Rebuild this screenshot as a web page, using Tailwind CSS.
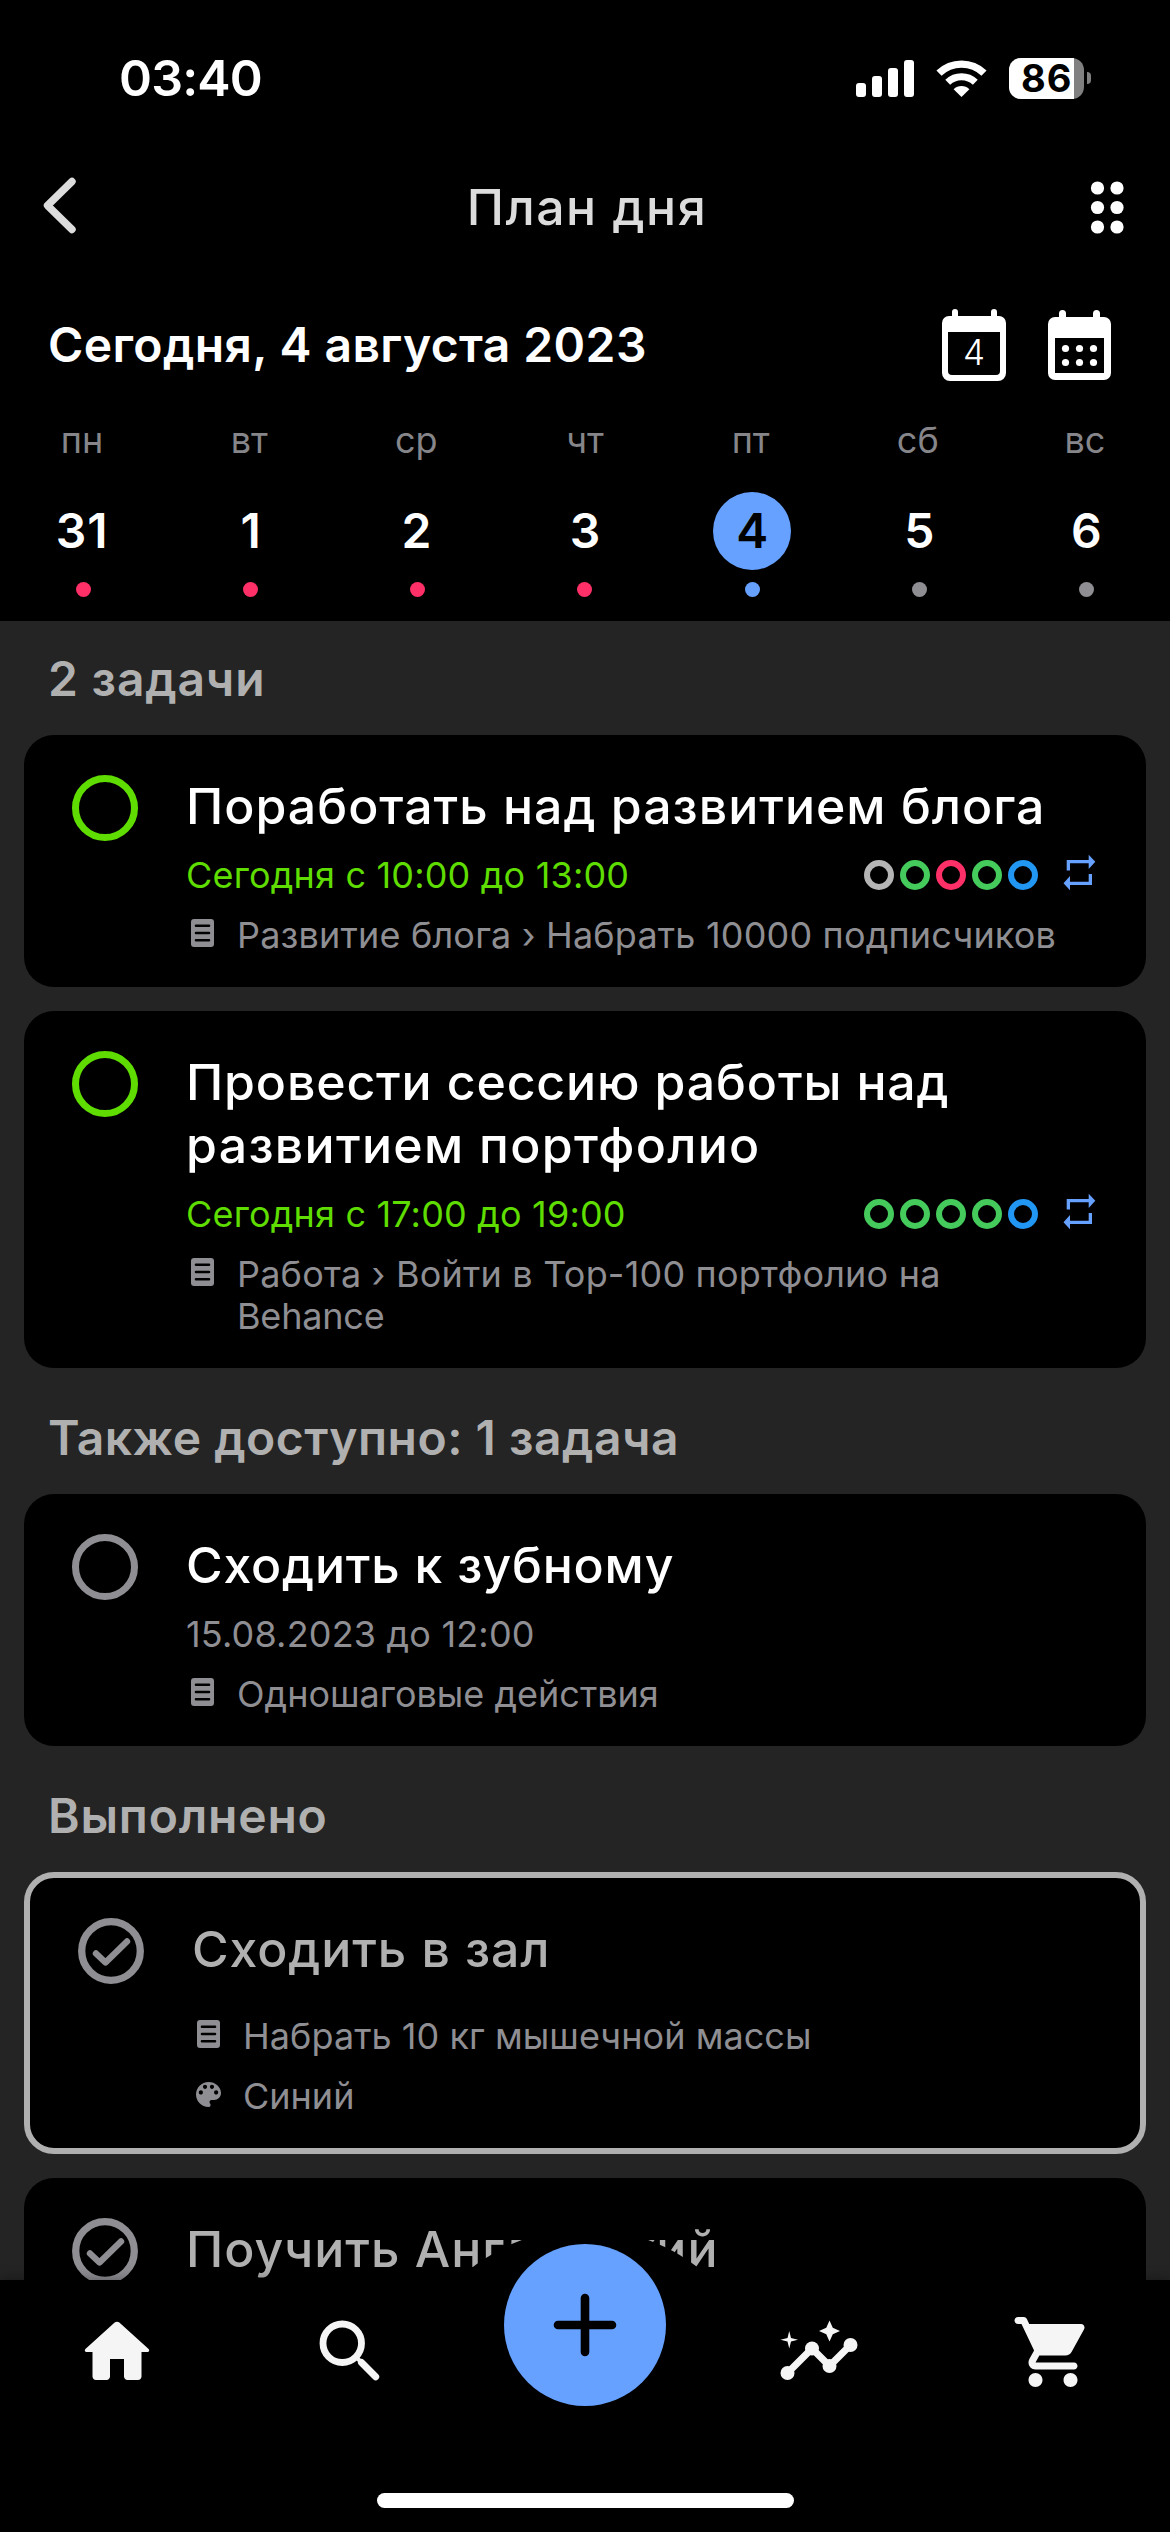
<!DOCTYPE html>
<html lang="ru">
<head>
  <meta charset="UTF-8">
  <meta name="viewport" content="width=device-width, initial-scale=1.0">
  <title>План дня</title>
  <script src="https://cdn.jsdelivr.net/npm/@tailwindcss/browser@4"></script>
</head>
<body class="bg-black">

  <!-- Shared icons -->
  <svg class="hidden">
    <symbol id="doc" viewBox="0 0 23 28">
      <path fill-rule="evenodd" d="M3 0h17a3 3 0 0 1 3 3v22a3 3 0 0 1-3 3H3a3 3 0 0 1-3-3V3a3 3 0 0 1 3-3zM5 5.5a1.3 1.3 0 0 0 0 2.6h13a1.3 1.3 0 0 0 0-2.6zM5 12.7a1.3 1.3 0 0 0 0 2.6h13a1.3 1.3 0 0 0 0-2.6zM5 19.9a1.3 1.3 0 0 0 0 2.6h13a1.3 1.3 0 0 0 0-2.6z"/>
    </symbol>
    <symbol id="repeat" viewBox="0 0 33 37">
      <path d="M3.7 16.5V6h22V.7l6.6 7-6.6 7.3V9.2H7v7.3z"/>
      <path d="M29 20v11H7v5.3L.5 29.3 7 22v5.8h18.7V20z"/>
    </symbol>
    <symbol id="check" viewBox="0 0 66 66">
      <circle cx="33" cy="33" r="29.3" fill="none" stroke="currentColor" stroke-width="7.3"/>
      <path d="M18 35.5l9.5 9L49 23.5" fill="none" stroke="currentColor" stroke-width="6.4" stroke-linecap="round" stroke-linejoin="round"/>
    </symbol>
  </svg>

  <div class="w-[1170px] h-[2532px] overflow-hidden flex flex-col bg-black text-white font-['Inter',sans-serif]">

    <!-- Status bar -->
    <div class="h-[156px] shrink-0 flex items-center justify-between pl-[119px] pr-[79px]">
      <span class="text-[50px] leading-[60px] font-semibold tracking-[-0.8px]">03:40</span>
      <div class="flex items-center">
        <svg class="w-[58px] h-[37px]" viewBox="0 0 58 37" fill="white">
          <rect x="0" y="23" width="10" height="14" rx="3"/>
          <rect x="16" y="16" width="10" height="21" rx="3"/>
          <rect x="32" y="8" width="10" height="29" rx="3"/>
          <rect x="48" y="0" width="10" height="37" rx="3"/>
        </svg>
        <svg class="w-[51px] h-[37px] ml-[22px]" viewBox="0 0 51 37">
          <path d="M3 13.2a32.5 32.5 0 0 1 45 0" fill="none" stroke="white" stroke-width="7.4"/>
          <path d="M11.7 22.2a20 20 0 0 1 27.6 0" fill="none" stroke="white" stroke-width="7"/>
          <path d="M17.6 29.2a11.5 11.5 0 0 1 15.8 0L25.5 37z" fill="white"/>
        </svg>
        <div class="flex items-center ml-[22px]">
          <div class="w-[75px] h-[41px] rounded-[12px] bg-[#808080]">
            <div class="w-[65px] h-full rounded-l-[12px] bg-white text-black flex items-center pl-[12px]">
              <span class="text-[38px] leading-[46px] font-bold tracking-[1px]">86</span>
            </div>
          </div>
          <div class="w-[4px] h-[12px] ml-[3px] rounded-r-full bg-[#808080]"></div>
        </div>
      </div>
    </div>

    <!-- App bar -->
    <header class="h-[102px] shrink-0 flex items-center justify-between pl-[42px] pr-[46px]">
      <svg class="w-[35px] h-[57px] -mt-[4px]" viewBox="0 0 35 57" fill="none" stroke="#dcdcdc" stroke-width="7.4" stroke-linecap="round" stroke-linejoin="round">
        <path d="M30 4.5L5.5 28.5 30 52.5"/>
      </svg>
      <h1 class="pl-[7px] text-[50px] leading-[60px] font-medium tracking-[1.5px] text-[#dcdcdc]">План дня</h1>
      <svg class="w-[34px] h-[53px]" viewBox="0 0 34 53" fill="white">
        <circle cx="7.5" cy="7" r="6.6"/><circle cx="27" cy="7" r="6.6"/>
        <circle cx="7.5" cy="26.5" r="6.6"/><circle cx="27" cy="26.5" r="6.6"/>
        <circle cx="7.5" cy="46" r="6.6"/><circle cx="27" cy="46" r="6.6"/>
      </svg>
    </header>

    <!-- Date -->
    <div class="h-[161px] shrink-0 flex items-center justify-between pl-[48px] pr-[59px] pt-[12px]">
      <h2 class="text-[48px] leading-[60px] font-semibold tracking-[0.4px]">Сегодня, 4 августа 2023</h2>
      <div class="flex items-center gap-[42px]">
        <svg class="w-[64px] h-[72px]" viewBox="0 0 64 72">
          <path fill="white" fill-rule="evenodd" d="M10 7V3a3 3 0 0 1 6 0v4h33V3a3 3 0 0 1 6 0v4h2a7 7 0 0 1 7 7v50a8 8 0 0 1-8 8H8a8 8 0 0 1-8-8V14a7 7 0 0 1 7-7zM6 23v39a4 4 0 0 0 4 4h44a4 4 0 0 0 4-4V23z"/>
          <text x="32" y="56" text-anchor="middle" fill="white" font-size="35" font-weight="300">4</text>
        </svg>
        <svg class="w-[63px] h-[70px]" viewBox="0 0 63 70" fill="white">
          <path fill-rule="evenodd" d="M11 7V3.5a3.5 3.5 0 0 1 7 0V7h27V3.5a3.5 3.5 0 0 1 7 0V7h4a7 7 0 0 1 7 7v49a7 7 0 0 1-7 7H7a7 7 0 0 1-7-7V14a7 7 0 0 1 7-7zM7 28v35h49V28z"/>
          <circle cx="17.5" cy="38.5" r="3.6"/><circle cx="31.5" cy="38.5" r="3.6"/><circle cx="45.5" cy="38.5" r="3.6"/>
          <circle cx="17.5" cy="52.5" r="3.6"/><circle cx="31.5" cy="52.5" r="3.6"/><circle cx="45.5" cy="52.5" r="3.6"/>
        </svg>
      </div>
    </div>

    <!-- Week -->
    <div class="h-[202px] shrink-0 grid grid-cols-7">
      <div class="flex flex-col items-center">
        <span class="text-[36px] leading-[42px] text-[#86868a] pr-[3px]">пн</span>
        <span class="mt-[31px] size-[78px] flex items-center justify-center text-[48px] font-semibold tracking-[1px] pr-[3px]">31</span>
        <span class="mt-[12px] size-[15px] rounded-full bg-[#ff2f67]"></span>
      </div>
      <div class="flex flex-col items-center">
        <span class="text-[36px] leading-[42px] text-[#86868a] pr-[3px]">вт</span>
        <span class="mt-[31px] size-[78px] flex items-center justify-center text-[48px] font-semibold">1</span>
        <span class="mt-[12px] size-[15px] rounded-full bg-[#ff2f67]"></span>
      </div>
      <div class="flex flex-col items-center">
        <span class="text-[36px] leading-[42px] text-[#86868a] pr-[3px]">ср</span>
        <span class="mt-[31px] size-[78px] flex items-center justify-center text-[48px] font-semibold pr-[3px]">2</span>
        <span class="mt-[12px] size-[15px] rounded-full bg-[#ff2f67]"></span>
      </div>
      <div class="flex flex-col items-center">
        <span class="text-[36px] leading-[42px] text-[#86868a]">чт</span>
        <span class="mt-[31px] size-[78px] flex items-center justify-center text-[48px] font-semibold">3</span>
        <span class="mt-[12px] size-[15px] rounded-full bg-[#ff2f67]"></span>
      </div>
      <div class="flex flex-col items-center">
        <span class="text-[36px] leading-[42px] text-[#86868a] pr-[3px]">пт</span>
        <span class="mt-[31px] size-[78px] flex items-center justify-center text-[48px] font-semibold rounded-full bg-[#66a1ff] text-black">4</span>
        <span class="mt-[12px] size-[15px] rounded-full bg-[#66a1ff]"></span>
      </div>
      <div class="flex flex-col items-center">
        <span class="text-[36px] leading-[42px] text-[#86868a] pr-[3px]">сб</span>
        <span class="mt-[31px] size-[78px] flex items-center justify-center text-[48px] font-semibold">5</span>
        <span class="mt-[12px] size-[15px] rounded-full bg-[#8e8e93]"></span>
      </div>
      <div class="flex flex-col items-center">
        <span class="text-[36px] leading-[42px] text-[#86868a] pr-[3px]">вс</span>
        <span class="mt-[31px] size-[78px] flex items-center justify-center text-[48px] font-semibold">6</span>
        <span class="mt-[12px] size-[15px] rounded-full bg-[#8e8e93]"></span>
      </div>
    </div>

    <!-- Tasks -->
    <main class="h-[1659px] shrink-0 overflow-hidden bg-[#242424] px-[24px]">

      <h3 class="pt-[28px] pb-[26px] pl-[24px] text-[48px] leading-[60px] font-semibold tracking-[0.8px] text-[#b0b0b0]">2 задачи</h3>

      <div class="flex rounded-[30px] bg-black pl-[48px] pr-[50px] pt-[40px] pb-[31px]">
        <div class="size-[66px] shrink-0 rounded-full border-[7px] border-[#5fdd00]"></div>
        <div class="flex-1 ml-[48px]">
          <div class="text-[50px] leading-[63px] tracking-[1px] font-medium whitespace-nowrap">Поработать над развитием блога</div>
          <div class="mt-[16px] flex items-center text-[36px] leading-[42px] text-[#5fdd00]">
            <span class="tracking-[0.18px]">Сегодня с 10:00 до 13:00</span>
            <div class="ml-auto flex gap-[6px]">
              <span class="size-[30px] rounded-full border-[6px] border-[#b5b5b5]"></span>
              <span class="size-[30px] rounded-full border-[6px] border-[#45cb5c]"></span>
              <span class="size-[30px] rounded-full border-[6px] border-[#ff2f67]"></span>
              <span class="size-[30px] rounded-full border-[6px] border-[#45cb5c]"></span>
              <span class="size-[30px] rounded-full border-[6px] border-[#2196f3]"></span>
            </div>
            <svg class="w-[33px] h-[37px] ml-[25px] -mt-[5px] fill-[#66a1ff]"><use href="#repeat"/></svg>
          </div>
          <div class="mt-[18px] flex text-[36px] leading-[42px] text-[#8e8e93]">
            <svg class="w-[23px] h-[28px] mt-[5px] ml-[5px] mr-[23px] shrink-0 fill-current"><use href="#doc"/></svg>
            <span class="tracking-[0.18px] whitespace-nowrap">Развитие блога › Набрать 10000 подписчиков</span>
          </div>
        </div>
      </div>

      <div class="mt-6 flex rounded-[30px] bg-black pl-[48px] pr-[50px] pt-[40px] pb-[31px]">
        <div class="size-[66px] shrink-0 rounded-full border-[7px] border-[#5fdd00]"></div>
        <div class="flex-1 ml-[48px]">
          <div class="text-[50px] leading-[63px] tracking-[0.85px] font-medium whitespace-nowrap">Провести сессию работы над<br><span class="tracking-[1.3px]">развитием портфолио</span></div>
          <div class="mt-[16px] flex items-center text-[36px] leading-[42px] text-[#5fdd00]">
            <span class="tracking-[0.18px]">Сегодня с 17:00 до 19:00</span>
            <div class="ml-auto flex gap-[6px]">
              <span class="size-[30px] rounded-full border-[6px] border-[#45cb5c]"></span>
              <span class="size-[30px] rounded-full border-[6px] border-[#45cb5c]"></span>
              <span class="size-[30px] rounded-full border-[6px] border-[#45cb5c]"></span>
              <span class="size-[30px] rounded-full border-[6px] border-[#45cb5c]"></span>
              <span class="size-[30px] rounded-full border-[6px] border-[#2196f3]"></span>
            </div>
            <svg class="w-[33px] h-[37px] ml-[25px] -mt-[5px] fill-[#66a1ff]"><use href="#repeat"/></svg>
          </div>
          <div class="mt-[18px] flex text-[36px] leading-[42px] text-[#8e8e93]">
            <svg class="w-[23px] h-[28px] mt-[5px] ml-[5px] mr-[23px] shrink-0 fill-current"><use href="#doc"/></svg>
            <span class="tracking-[0.2px] whitespace-nowrap">Работа › Войти в Top-100 портфолио на<br><span class="tracking-[-0.2px]">Behance</span></span>
          </div>
        </div>
      </div>

      <h3 class="pt-[40px] pb-[26px] pl-[24px] text-[48px] leading-[60px] font-semibold tracking-[0.5px] text-[#b0b0b0]">Также доступно: 1 задача</h3>

      <div class="flex rounded-[30px] bg-black pl-[48px] pr-[50px] pt-[40px] pb-[31px]">
        <div class="size-[66px] shrink-0 rounded-full border-[7px] border-[#8e8e93]"></div>
        <div class="flex-1 ml-[48px]">
          <div class="text-[50px] leading-[63px] tracking-[0.8px] font-medium">Сходить к зубному</div>
          <div class="mt-[16px] text-[36px] leading-[42px] tracking-[0.18px] text-[#8e8e93]">15.08.2023 до 12:00</div>
          <div class="mt-[18px] flex text-[36px] leading-[42px] text-[#8e8e93]">
            <svg class="w-[23px] h-[28px] mt-[5px] ml-[5px] mr-[23px] shrink-0 fill-current"><use href="#doc"/></svg>
            <span>Одношаговые действия</span>
          </div>
        </div>
      </div>

      <h3 class="pt-[40px] pb-[26px] pl-[24px] text-[48px] leading-[60px] font-semibold tracking-[0.8px] text-[#b0b0b0]">Выполнено</h3>

      <div class="flex rounded-[30px] bg-black border-[6px] border-[#b0b0b0] pl-[48px] pr-[44px] pt-[40px] pb-[31px]">
        <svg class="size-[66px] shrink-0 text-[#8e8e93]"><use href="#check"/></svg>
        <div class="flex-1 ml-[48px]">
          <div class="text-[50px] leading-[63px] tracking-[0.9px] font-medium text-[#b0b0b0]">Сходить в зал</div>
          <div class="mt-[34px] flex text-[36px] leading-[42px] text-[#8e8e93]">
            <svg class="w-[23px] h-[28px] mt-[5px] ml-[5px] mr-[23px] shrink-0 fill-current"><use href="#doc"/></svg>
            <span class="tracking-[0.05px]">Набрать 10 кг мышечной массы</span>
          </div>
          <div class="mt-[18px] flex text-[36px] leading-[42px] text-[#8e8e93]">
            <svg class="size-[25px] mt-[7px] ml-[4px] mr-[22px] shrink-0 fill-current" viewBox="3 3 18 18">
              <path d="M12 3c-4.97 0-9 4.03-9 9s4.03 9 9 9c.83 0 1.5-.67 1.5-1.5 0-.39-.15-.74-.39-1.01-.23-.26-.38-.61-.38-.99 0-.83.67-1.5 1.5-1.5H16c2.76 0 5-2.24 5-5 0-4.42-4.03-8-9-8zm-5.5 9c-.83 0-1.5-.67-1.5-1.5S5.67 9 6.5 9 8 9.67 8 10.5 7.33 12 6.5 12zm3-4C8.67 8 8 7.33 8 6.5S8.67 5 9.5 5s1.5.67 1.5 1.5S10.33 8 9.5 8zm5 0c-.83 0-1.5-.67-1.5-1.5S13.67 5 14.5 5s1.5.67 1.5 1.5S15.33 8 14.5 8zm3 4c-.83 0-1.5-.67-1.5-1.5S16.67 9 17.5 9s1.5.67 1.5 1.5-.67 1.5-1.5 1.5z"/>
            </svg>
            <span>Синий</span>
          </div>
        </div>
      </div>

      <div class="mt-6 flex rounded-[30px] bg-black pl-[48px] pr-[50px] pt-[40px] pb-[31px]">
        <svg class="size-[66px] shrink-0 text-[#8e8e93]"><use href="#check"/></svg>
        <div class="flex-1 ml-[48px]">
          <div class="text-[50px] leading-[63px] tracking-[1px] font-medium text-[#b0b0b0]">Поучить Английский</div>
        </div>
      </div>
    </main>

    <!-- Bottom navigation -->
    <nav class="relative h-[252px] shrink-0 bg-black shadow-[0_0_12px_rgba(0,0,0,0.4)] grid grid-cols-5 content-between pb-[24px]">
      <!-- Bump under the add button -->
      <div class="absolute left-[400px] -top-[51px] size-[370px] rounded-full bg-black"></div>
      <div class="absolute left-[481px] -top-[61px] size-[208px] rounded-full bg-black"></div>

      <svg class="relative size-[84px] mt-[30px] mx-auto fill-[#f5f5f5]" viewBox="0 0 24 24">
        <path d="M10 19v-5h4v5c0 .55.45 1 1 1h3c.55 0 1-.45 1-1v-7h1.7c.46 0 .68-.57.33-.87L12.67 3.6c-.38-.34-.96-.34-1.34 0l-8.36 7.53c-.34.3-.13.87.33.87H5v7c0 .55.45 1 1 1h3c.55 0 1-.45 1-1z"/>
      </svg>
      <svg class="relative size-[84px] mt-[30px] mx-auto" viewBox="0 0 24 24" fill="none" stroke="#f5f5f5">
        <circle cx="9.5" cy="9.5" r="5.5" stroke-width="1.95"/>
        <path d="M13.3 13.3l2 2" stroke-width="1.2"/>
        <path d="M15 15l4.05 4.05" stroke-width="2" stroke-linecap="round"/>
      </svg>
      <button class="relative size-[162px] -mt-[36px] mx-auto rounded-full bg-[#66a1ff] flex items-center justify-center">
        <svg class="size-[64px]" viewBox="0 0 64 64" stroke="black" stroke-width="8.6" stroke-linecap="round">
          <path d="M32 5v54M5 32h54"/>
        </svg>
      </button>
      <svg class="relative size-[84px] mt-[30px] mx-auto fill-[#f5f5f5]" viewBox="0 0 24 24">
        <path d="M3 18l7-7 5 5 6-6" fill="none" stroke="#f5f5f5" stroke-width="2"/>
        <circle cx="3" cy="18" r="2"/><circle cx="10" cy="11" r="2"/><circle cx="15" cy="16" r="2"/><circle cx="21" cy="10" r="2"/>
        <path d="M15 9l.94-2.07L18 6l-2.06-.93L15 3l-.92 2.07L12 6l2.08.93zM3.5 11L4 9l2-.5L4 8l-.5-2L3 8l-2 .5L3 9z"/>
      </svg>
      <svg class="relative size-[84px] mt-[30px] mx-auto fill-[#f5f5f5]" viewBox="0 0 24 24">
        <path d="M7 18c-1.1 0-1.99.9-1.99 2S5.9 22 7 22s2-.9 2-2-.9-2-2-2zM1 3c0 .55.45 1 1 1h1l3.6 7.59-1.35 2.44C4.52 15.37 5.48 17 7 17h11c.55 0 1-.45 1-1s-.45-1-1-1H7l1.1-2h7.45c.75 0 1.41-.41 1.75-1.03l3.58-6.49c.37-.66-.11-1.48-.87-1.48H5.21l-.67-1.43c-.16-.35-.52-.57-.9-.57H2c-.55 0-1 .45-1 1zm16 15c-1.1 0-1.99.9-1.99 2s.89 2 1.99 2 2-.9 2-2-.9-2-2-2z"/>
      </svg>

      <!-- Home indicator -->
      <div class="relative col-span-5 mx-auto w-[417px] h-[15px] rounded-full bg-white"></div>
    </nav>
  </div>

</body>
</html>
